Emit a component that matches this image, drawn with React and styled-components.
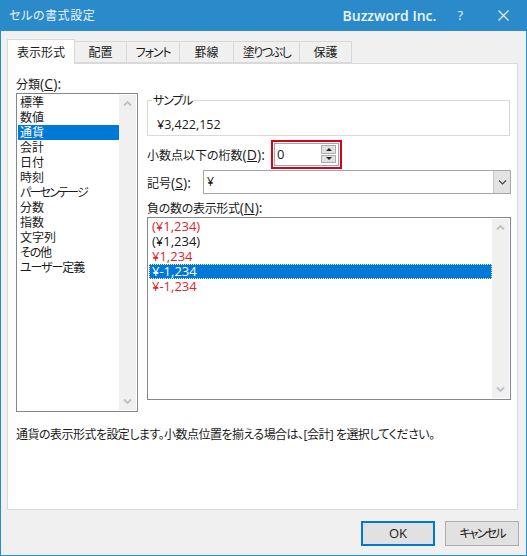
import React from "react";
import styled, { createGlobalStyle } from "styled-components";

const FONT = `"Open Sans", "Noto Sans CJK JP", sans-serif`;

const Global = createGlobalStyle`
  html, body { margin: 0; padding: 0; background: #f0f0f0; }
  * { box-sizing: border-box; }
`;

const Win = styled.div`
  width: 527px; height: 556px; background: #f0f0f0;
  border: 1px solid #2b8bca; border-top: 0;
  font: 12px/15px ${FONT}; color: #1a1a1a;
  font-feature-settings: "palt" 1;
  display: flex; flex-direction: column; overflow: hidden;
`;
const TitleBar = styled.div`
  height: 31px; flex: none; background: #2b8bca; color: #fff;
  display: flex; align-items: center; padding: 0 17px 0 8px;
`;
const TitleText = styled.div`flex: 1; font-size: 12px; color: #eaf4fb; letter-spacing: 0.6px;`;
const Brand = styled.div`font-size: 14px; font-weight: 600; margin-right: 21px; color: #eef7fc; padding-bottom: 1px;`;
const Help = styled.div`font-size: 13px; margin-right: 35px; color: #eef7fc;`;
const Tabs = styled.div`
  display: flex; align-items: flex-end; height: 24px; flex: none;
  margin: 8px 0 0 6px; position: relative; z-index: 1;
`;
const Tab = styled.div`
  width: ${p => p.$w}px; height: ${p => (p.$on ? 25 : 22)}px;
  margin-bottom: ${p => (p.$on ? -1 : 0)}px;
  background: ${p => (p.$on ? "#fff" : "#f0f0f0")};
  border: 1px solid #d9d9d9; border-left-width: ${p => (p.$on ? 1 : 0)}px;
  border-bottom-width: ${p => (p.$on ? 0 : 1)}px;
  letter-spacing: ${p => p.$ls || 0}px;
  display: flex; align-items: center; justify-content: center;
`;
const Panel = styled.div`
  margin-left: 6px; width: 511px; height: 447px; flex: none;
  background: #fff; border: 1px solid #d9d9d9;
  padding: 11px 6px 0 8px; display: flex; flex-direction: column;
`;
const Columns = styled.div`display: grid; grid-template-columns: 122px 364px; column-gap: 9px;`;
const Label = styled.div`height: 17px; line-height: 17px; white-space: nowrap; letter-spacing: ${p => p.$ls || 0}px;`;
const Accel = styled.span`font-size: 14px; letter-spacing: 0.1px;`;
const ListBox = styled.div`
  position: relative; margin-top: ${p => p.$mt || 0}px; height: ${p => p.$h}px;
  border: 1px solid #828790; background: #fff; padding: 1px 18px 0 1px;
  display: flex; flex-direction: column;
`;
const Row = styled.div`
  height: 15px; line-height: 15px; padding-left: ${p => p.$pl}px; flex: none; white-space: nowrap;
  font-size: ${p => p.$fs || 12}px;
  letter-spacing: ${p => p.$ls || 0}px;
  color: ${p => (p.$sel ? "#fff" : p.$red ? "#e4232b" : "#1a1a1a")};
  background: ${p => (p.$sel ? "#0078d7" : "transparent")};
  outline: ${p => (p.$focus ? "1px dotted #fff" : "none")}; outline-offset: -1px;
`;
const Scroll = styled.div`
  position: absolute; top: 1px; right: 1px; bottom: 1px; width: 17px; background: #f0f0f0;
  display: flex; flex-direction: column; justify-content: space-between; align-items: center;
  padding: 5px 0;
`;
const Chevron = ({ up, color = "#c0c0c0", w = 1.8 }) => (
  <svg width="9" height="7" viewBox="0 0 9 7">
    <path d={up ? "M1 5.5 L4.5 2 L8 5.5" : "M1 1.5 L4.5 5 L8 1.5"} fill="none" stroke={color} strokeWidth={w} />
  </svg>
);
const RightCol = styled.div`padding-top: 25px; display: flex; flex-direction: column;`;
const Sample = styled.div`
  position: relative; height: 36px; width: 363px; border: 1px solid #d9d9d9;
  padding: 15px 0 0 9px; line-height: 17px; font-size: 12.5px;
`;
const Legend = styled.div`
  position: absolute; top: -8px; left: 4px; background: #fff; padding: 0 1px; line-height: 15px; font-size: 12px;
  letter-spacing: -1.2px;
`;
const SpinRow = styled.div`display: flex; align-items: center; margin-top: 4px; height: 29px;`;
const SpinLabel = styled(Label)`width: 124px;`;
const RedBox = styled.div`
  width: 71px; height: 29px; border: 2px solid #d9001b; background: #fff; padding: 1px;
  display: flex;
`;
const SpinInput = styled.div`
  flex: 1; border: 1px solid #a6a6a6; padding: 1px 2px 0 2px; display: flex; justify-content: space-between;
  line-height: 18px; font-size: 13px;
`;
const SpinBtns = styled.div`display: flex; flex-direction: column; gap: 1px; width: 15px; height: 18px;`;
const SpinBtn = styled.div`
  flex: 1; background: #e1e1e1; border: 1px solid #adadad;
  display: flex; align-items: center; justify-content: center;
`;
const Tri = styled.div`
  width: 0; height: 0; border-left: 3px solid transparent; border-right: 3px solid transparent;
  ${p => (p.$up ? "border-bottom: 3px solid #222;" : "border-top: 3px solid #222;")}
`;
const SymRow = styled.div`display: flex; align-items: center; margin-top: 1px; height: 24px;`;
const SymLabel = styled(Label)`width: 56px;`;
const Select = styled.div`
  width: 308px; height: 24px; border: 1px solid #a6a6a6; background: #fff;
  display: flex; justify-content: space-between;
  padding-left: 3px; line-height: 22px;
`;
const SelectBtn = styled.div`
  width: 17px; background: #e3e3e3; border-left: 1px solid #c8c8c8;
  display: flex; align-items: center; justify-content: center;
`;
const NegLabel = styled(Label)`margin-top: 5px;`;
const Desc = styled.div`margin-top: 14px; line-height: 17px; white-space: nowrap; letter-spacing: -0.53px;`;
const Footer = styled.div`display: flex; justify-content: flex-end; gap: 10px; margin: 11px 7px 0 0;`;
const Button = styled.div`
  width: 74px; height: 25px; background: #e1e1e1; font-size: ${p => (p.$primary ? 13 : 12)}px;
  border: ${p => (p.$primary ? "2px solid #0078d7" : "1px solid #adadad")};
  letter-spacing: ${p => (p.$primary ? 0 : -1.8)}px;
  display: flex; align-items: center; justify-content: center;
`;

const cats = [["標準"],["数値"],["通貨"],["会計"],["日付"],["時刻"],["パーセンテージ",-1.8],["分数"],["指数"],["文字列"],["その他",-1.2],["ユーザー定義",-1.1]];
const negs = [
  { t: "(¥1,234)", red: true },
  { t: "(¥1,234)" },
  { t: "¥1,234", red: true },
  { t: "¥-1,234", sel: true },
  { t: "¥-1,234", red: true },
];
const tabs = [["表示形式", 68], ["配置", 52], ["フォント", 53, -1.2], ["罫線", 54], ["塗りつぶし", 66, -1.5], ["保護", 52]];

export default function App() {
  return (
    <>
      <Global />
      <Win>
        <TitleBar>
          <TitleText>セルの書式設定</TitleText>
          <Brand>Buzzword Inc.</Brand>
          <Help>?</Help>
          <svg width="11" height="11" viewBox="0 0 11 11">
            <path d="M0.5 0.5 L10.5 10.5 M10.5 0.5 L0.5 10.5" stroke="#eef7fc" strokeWidth="1.1" />
          </svg>
        </TitleBar>
        <Tabs>
          {tabs.map(([t, w, ls], i) => <Tab key={t} $w={w} $ls={ls} $on={i === 0}>{t}</Tab>)}
        </Tabs>
        <Panel>
          <Columns>
            <div>
              <Label>分類<Accel>(<u>C</u>):</Accel></Label>
              <ListBox $h={319} $mt={1}>
                {cats.map(([c, ls], i) => <Row key={c} $pl={2} $ls={ls} $sel={i === 2}>{c}</Row>)}
                <Scroll><Chevron up /><Chevron /></Scroll>
              </ListBox>
            </div>
            <RightCol>
              <Sample>
                <Legend>サンプル</Legend>
                ¥3,422,152
              </Sample>
              <SpinRow>
                <SpinLabel>小数点以下の桁数<Accel>(<u>D</u>):</Accel></SpinLabel>
                <RedBox>
                  <SpinInput>
                    0
                    <SpinBtns>
                      <SpinBtn><Tri $up /></SpinBtn>
                      <SpinBtn><Tri /></SpinBtn>
                    </SpinBtns>
                  </SpinInput>
                </RedBox>
              </SpinRow>
              <SymRow>
                <SymLabel>記号<Accel>(<u>S</u>):</Accel></SymLabel>
                <Select>
                  ¥
                  <SelectBtn><Chevron color="#444" w={1.1} /></SelectBtn>
                </Select>
              </SymRow>
              <NegLabel $ls={-0.3}>負の数の表示形式<Accel>(<u>N</u>):</Accel></NegLabel>
              <ListBox $h={183} $mt={1}>
                {negs.map((n, i) => (
                  <Row key={i} $pl={3} $fs={13} $red={n.red} $sel={n.sel} $focus={n.sel}>{n.t}</Row>
                ))}
                <Scroll><Chevron up /><Chevron /></Scroll>
              </ListBox>
            </RightCol>
          </Columns>
          <Desc>通貨の表示形式を設定します。小数点位置を揃える場合は、[会計] を選択してください。</Desc>
        </Panel>
        <Footer>
          <Button $primary>OK</Button>
          <Button>キャンセル</Button>
        </Footer>
      </Win>
    </>
  );
}
